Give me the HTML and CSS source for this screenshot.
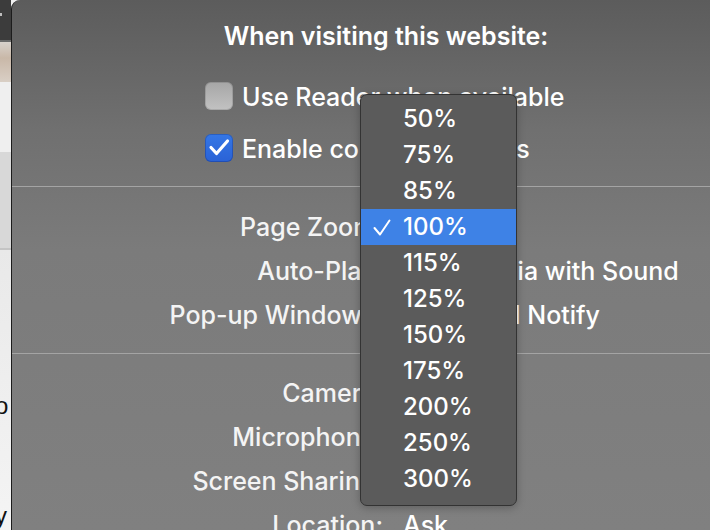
FILE: index.html
```html
<!DOCTYPE html>
<html>
<head>
<meta charset="utf-8">
<link rel="stylesheet" href="styles.css">
</head>
<body>
<div class="screen">
  <aside class="behind">
    <div class="b-toolbar"><span class="b-chev"></span></div>
    <div class="b-line"></div>
    <div class="b-photo"></div>
    <div class="b-light"></div>
    <div class="b-gray"></div>
    <div class="b-rule"></div>
    <div class="b-page">
      <div class="b-letter b-o">o</div>
      <div class="b-letter b-y">y</div>
    </div>
  </aside>
  <section class="panel">
    <h1 class="title">When visiting this website:</h1>
    <div class="checks">
      <div class="check"><span class="box"></span><span class="check-label">Use Reader when available</span></div>
      <div class="check"><span class="box on"><svg viewBox="0 0 28 28" width="28" height="28"><polyline points="6,13.5 11.5,19.5 22.5,7" fill="none" stroke="#fff" stroke-width="3.2" stroke-linecap="round" stroke-linejoin="round"/></svg></span><span class="check-label">Enable content blockers</span></div>
    </div>
    <div class="rule"></div>
    <div class="rows first">
      <span class="label">Page Zoom:</span><span class="value">100%</span>
      <span class="label">Auto-Play:</span><span class="value">Stop Media with Sound</span>
      <span class="label">Pop-up Windows:</span><span class="value">Block and Notify</span>
    </div>
    <div class="rule"></div>
    <div class="rows second">
      <span class="label">Camera:</span><span class="value">Ask</span>
      <span class="label">Microphone:</span><span class="value">Ask</span>
      <span class="label">Screen Sharing:</span><span class="value">Ask</span>
      <span class="label">Location:</span><span class="value">Ask</span>
    </div>
    <div class="menu">
      <div class="item">50%</div>
      <div class="item">75%</div>
      <div class="item">85%</div>
      <div class="item selected"><svg class="tick" viewBox="0 0 18 17" width="18" height="17"><polyline points="1.5,9 7,15.5 16.5,1.5" fill="none" stroke="#fff" stroke-width="2" stroke-linecap="round" stroke-linejoin="round"/></svg>100%</div>
      <div class="item">115%</div>
      <div class="item">125%</div>
      <div class="item">150%</div>
      <div class="item">175%</div>
      <div class="item">200%</div>
      <div class="item">250%</div>
      <div class="item">300%</div>
    </div>
  </section>
</div>
</body>
</html>
```
FILE: styles.css
```css
* { box-sizing: border-box; }
html, body { margin: 0; padding: 0; }
body {
  width: 710px;
  height: 530px;
  overflow: hidden;
  font-family: Inter, "Noto Sans", sans-serif;
  background: #f0f0f0;
}
.screen {
  display: flex;
  height: 530px;
}
.behind {
  width: 11px;
  flex: none;
  display: flex;
  flex-direction: column;
  overflow: hidden;
}
.b-toolbar {
  height: 40px;
  background: #3c3c3c;
  position: relative;
}
.b-chev {
  position: absolute;
  left: 0;
  top: 13px;
  width: 2px;
  height: 3px;
  background: #bdbdbd;
}
.b-line { height: 2px; background: #6a6a6a; }
.b-photo {
  height: 40px;
  background: linear-gradient(180deg, #d8d2cc 0%, #c9b8a8 40%, #d9cfc5 100%);
}
.b-light { height: 70px; background: #efefef; }
.b-gray { height: 96px; background: #d8d8d8; }
.b-rule { height: 2px; background: #c4c4c4; }
.b-page {
  flex: 1;
  background: linear-gradient(180deg, #e9e9e9, #f4f4f4);
  position: relative;
  font-size: 24px;
  color: #111;
}
.b-letter {
  position: absolute;
  left: -5px;
  line-height: 24px;
  font-family: "Liberation Sans", sans-serif;
}
.b-o { top: 144px; }
.b-y { top: 254px; }

.panel {
  flex: 1;
  position: relative;
  border-left: 1px solid #1c1c1c;
  border-top-left-radius: 9px;
  background: linear-gradient(180deg, #5c5c5c 0px, #707070 130px, #7b7b7b 250px, #808080 530px);
  padding-top: 22px;
  color: #fff;
}
.title {
  margin: 0 0 0 50px;
  font-size: 25px;
  line-height: 28px;
  font-weight: 600;
  text-align: center;
  color: #fff;
}
.checks {
  margin: 32px 0 24px 193px;
  display: flex;
  flex-direction: column;
  gap: 24px;
}
.check {
  display: flex;
  align-items: center;
  gap: 9px;
  height: 28px;
}
.check-label {
  font-size: 25px;
  font-weight: 500;
  line-height: 28px;
  position: relative;
  top: 1px;
}
.box {
  width: 28px;
  height: 28px;
  border-radius: 6px;
  background: linear-gradient(180deg, #a6a6a6, #c2c2c2);
  box-shadow: inset 0 0 0 1px rgba(0,0,0,0.12);
  display: block;
}
.box.on {
  background: linear-gradient(180deg, #3577e6, #2a62d6);
  box-shadow: inset 0 0 0 1px rgba(0,0,40,0.2);
}
.box svg { display: block; }
.rule {
  height: 1px;
  background: #a4a4a4;
}
.rows {
  display: grid;
  grid-template-columns: 371px 1fr;
  column-gap: 20px;
  grid-auto-rows: 44px;
  align-items: center;
  font-size: 25px;
  font-weight: 500;
}
.rows.first { margin: 18px 0 16px; }
.rows.second { margin-top: 17px; }
.label { text-align: right; color: #f4f4f4; white-space: nowrap; }
.value { color: #fff; white-space: nowrap; }

.menu {
  position: absolute;
  left: 348px;
  top: 94px;
  width: 157px;
  height: 412px;
  background: #5b5b5b;
  border: 1px solid #333;
  border-radius: 7px;
  padding: 6px 0 4px;
  box-shadow: 0 2px 8px rgba(0,0,0,0.25);
}
.item {
  position: relative;
  height: 36px;
  line-height: 36px;
  padding-left: 42px;
  font-size: 24px;
  font-weight: 500;
  color: #fff;
}
.item.selected { background: #3e82e6; }
.tick {
  position: absolute;
  left: 12px;
  top: 10px;
}
```
